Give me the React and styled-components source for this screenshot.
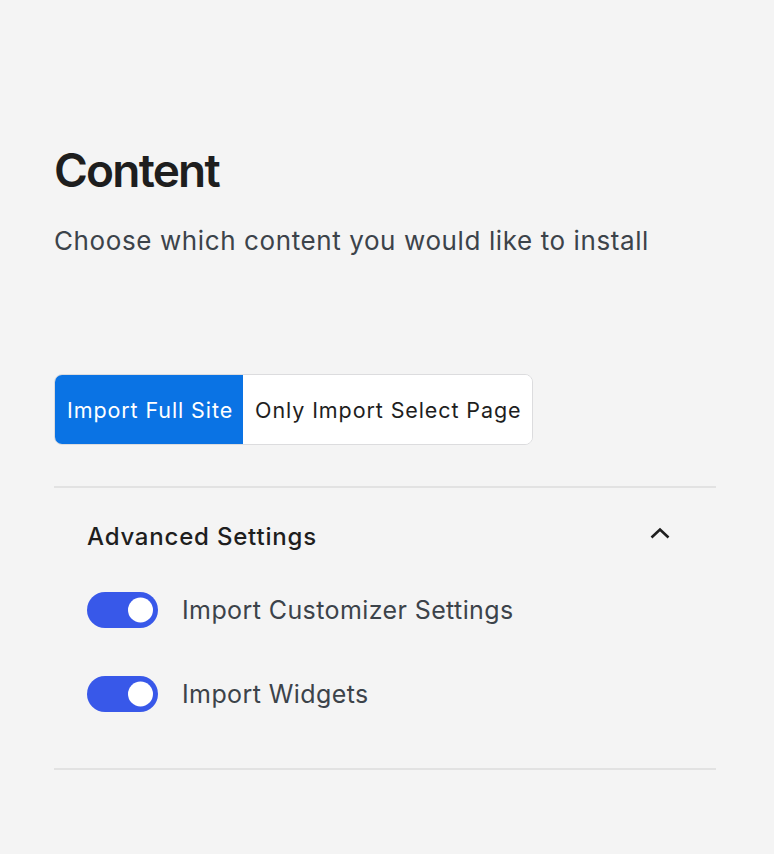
import React from "react";
import styled, { createGlobalStyle } from "styled-components";

const Global = createGlobalStyle`
  html, body { margin: 0; padding: 0; background: #f4f4f4; }
  body { font-family: Inter, "Noto Sans", sans-serif; -webkit-font-smoothing: antialiased; }
`;

const Page = styled.div`
  padding: 140px 58px 0 54px;
  min-height: 854px;
  box-sizing: border-box;
`;

const Title = styled.h1`
  margin: 0;
  font-size: 46px;
  font-weight: 600;
  letter-spacing: -1.8px;
  color: #1e1e1e;
  line-height: 60px;
`;

const Subtitle = styled.p`
  margin: 25px 0 0;
  font-size: 26px;
  letter-spacing: 0.6px;
  color: #3c434a;
  line-height: 32px;
`;

const Group = styled.div`
  display: inline-flex;
  margin-top: 117px;
  border: 1px solid #dcdcde;
  border-radius: 8px;
  overflow: hidden;
  background: #fff;
`;

const Seg = styled.button`
  border: none;
  margin: 0;
  height: 69px;
  padding: 0 10px 0 12px;
  font-family: inherit;
  font-size: 21.5px;
  letter-spacing: 0.9px;
  background: ${(p) => (p.$active ? "#0a73e4" : "#fff")};
  color: ${(p) => (p.$active ? "#fff" : "#1e1e1e")};
  cursor: pointer;
`;

const Section = styled.div`
  margin-top: 41px;
  border-top: 2px solid #e2e2e2;
  border-bottom: 2px solid #e2e2e2;
  padding: 24px 33px 56px;
`;

const Header = styled.div`
  display: flex;
  justify-content: space-between;
  align-items: center;
  height: 48px;
`;

const HeaderTitle = styled.span`
  font-size: 24px;
  font-weight: 500;
  letter-spacing: 0.8px;
  color: #1e1e1e;
`;

const Chevron = styled.svg`
  width: 22px;
  height: 12px;
  margin-right: 12px;
  margin-bottom: 6px;
`;

const List = styled.div`
  display: flex;
  flex-direction: column;
  gap: 48px;
  margin-top: 32px;
`;

const Row = styled.label`
  display: flex;
  align-items: center;
  gap: 24px;
  height: 36px;
`;

const Toggle = styled.span`
  position: relative;
  width: 71px;
  height: 36px;
  border-radius: 18px;
  background: #3858e9;
  flex-shrink: 0;
  &::after {
    content: "";
    position: absolute;
    top: 50%;
    right: 5px;
    transform: translateY(-50%);
    width: 25px;
    height: 25px;
    border-radius: 50%;
    background: #fff;
  }
`;

const RowText = styled.span`
  font-size: 25px;
  letter-spacing: 0.4px;
  color: #3c434a;
`;

export default function App() {
  return (
    <>
      <Global />
      <Page>
        <Title>Content</Title>
        <Subtitle>Choose which content you would like to install</Subtitle>
        <Group>
          <Seg $active>Import Full Site</Seg>
          <Seg>Only Import Select Page</Seg>
        </Group>
        <Section>
          <Header>
            <HeaderTitle>Advanced Settings</HeaderTitle>
            <Chevron viewBox="0 0 22 12" fill="none">
              <path d="M2.5 10.5L11 2.5L19.5 10.5" stroke="#1e1e1e" strokeWidth="2.6" />
            </Chevron>
          </Header>
          <List>
            <Row>
              <Toggle />
              <RowText>Import Customizer Settings</RowText>
            </Row>
            <Row>
              <Toggle />
              <RowText>Import Widgets</RowText>
            </Row>
          </List>
        </Section>
      </Page>
    </>
  );
}
